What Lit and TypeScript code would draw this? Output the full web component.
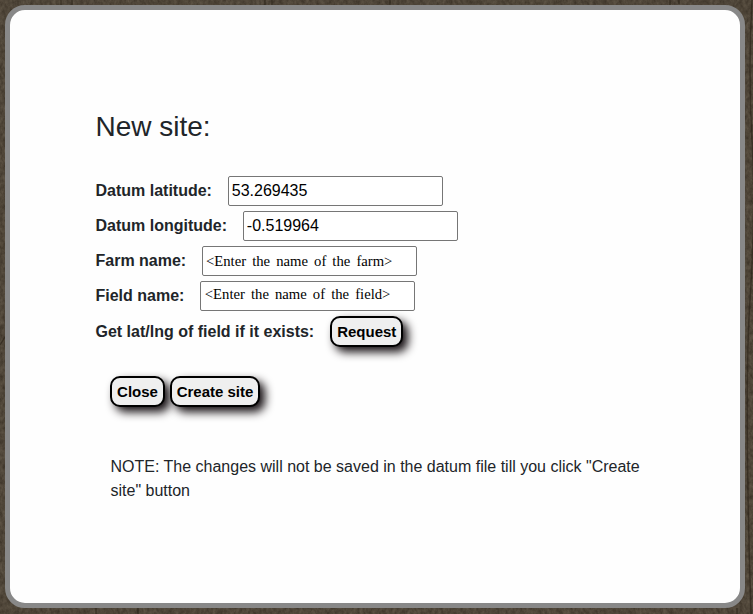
import { LitElement, html, css, svg } from "lit";
import { customElement } from "lit/decorators.js";
import { classMap } from "lit/directives/class-map.js";

interface Field {
  label: string;
  value: string;
  kind: "number" | "farm" | "field";
}

const FIELDS: Field[] = [
  { label: "Datum latitude:", value: "53.269435", kind: "number" },
  { label: "Datum longitude:", value: "-0.519964", kind: "number" },
  { label: "Farm name:", value: "<Enter the name of the farm>", kind: "farm" },
  { label: "Field name:", value: "<Enter the name of the field>", kind: "field" },
];

// Dark wood grain behind the dialog.
const grain = svg`
  <filter id="grain" x="0" y="0" width="100%" height="100%" color-interpolation-filters="sRGB">
    <feTurbulence type="fractalNoise" baseFrequency="0.3 0.2" numOctaves="4" seed="7" />
    <feColorMatrix values="0.17 0 0 0 0.222  0.165 0 0 0 0.188  0.15 0 0 0 0.145  0 0 0 0 1" />
  </filter>
  <rect width="753" height="614" filter="url(#grain)" />
  <path d="M61 0v7M72 0v5M265 0v5M272 0v5M390 0v5M670 0v6M679 0v4M752 0q-4 70 0 140t-2 160t1 314M96 608v6M138 608v6M737 608v6M0 345l5-8" fill="none" stroke="#2a2218" stroke-width="1.4" opacity=".6" />
`;

@customElement("app-root")
export class AppRoot extends LitElement {
  static styles = css`
    :host {
      display: block;
      position: relative;
      box-sizing: border-box;
      width: 753px;
      height: 614px;
      padding: 5px 8px 6px 5px;
      overflow: hidden;
      background: #50463a;
      font: 16px/24px "Liberation Sans", Arial, sans-serif;
      color: #212529;
    }
    .wood {
      position: absolute;
      inset: 0;
      width: 753px;
      height: 614px;
    }
    .dialog {
      position: relative;
      box-sizing: border-box;
      width: 740px;
      height: 603px;
      border: 5px solid #888;
      border-radius: 20px;
      background: #fefefe;
      padding: 100px 86px 0 85.5px;
    }
    h3 {
      margin: 0 0 32px;
      font-size: 28px;
      line-height: 34px;
      font-weight: 400;
    }
    .row {
      display: flex;
      align-items: center;
      gap: 16px;
      height: 30px;
      margin-bottom: 5px;
    }
    label {
      font-weight: 700;
      white-space: nowrap;
    }
    input {
      box-sizing: border-box;
      width: 215px;
      height: 30px;
      margin: 0;
      padding: 1px 2.8px;
      border: 1px solid #767676;
      border-radius: 2px;
      background: #fff;
      color: #000;
      font: 16px "Liberation Sans", Arial, sans-serif;
    }
    .serif {
      font: 14.7px "Liberation Serif", serif;
      word-spacing: 2.4px;
    }
    .farm {
      padding-top: 2px;
    }
    .field {
      padding-left: 3.4px;
      padding-bottom: 5px;
    }
    button {
      box-sizing: border-box;
      height: 31px;
      margin: 0;
      padding: 0 5px;
      border: 2px solid #000;
      border-radius: 10px;
      background: #efefef;
      color: #000;
      font: 700 15px "Liberation Sans", Arial, sans-serif;
      box-shadow: 5px 5px 10px #140e11;
      white-space: nowrap;
    }
    .request {
      height: 31px;
      margin-bottom: 29px;
    }
    .actions {
      display: flex;
      gap: 5px;
      padding-left: 14.5px;
    }
    .close {
      width: 55px;
    }
    .create {
      width: 90px;
      padding: 0 4px;
    }
    .note {
      margin: 48px 0 0 15px;
    }
  `;

  render() {
    return html`
      <svg class="wood" viewBox="0 0 753 614" aria-hidden="true">${grain}</svg>
      <section class="dialog">
        <h3>New site:</h3>
        ${FIELDS.map(
          (f, i) => html`
            <div class="row">
              <label for="f${i}">${f.label}</label>
              <input
                id="f${i}"
                class=${classMap({ serif: f.kind !== "number", [f.kind]: true })}
                .value=${f.value}
              />
            </div>
          `
        )}
        <div class="row request">
          <label>Get lat/lng of field if it exists:</label>
          <button>Request</button>
        </div>
        <div class="actions">
          <button class="close">Close</button>
          <button class="create">Create site</button>
        </div>
        <p class="note">
          NOTE: The changes will not be saved in the datum file till you click "Create site" button
        </p>
      </section>
    `;
  }
}
